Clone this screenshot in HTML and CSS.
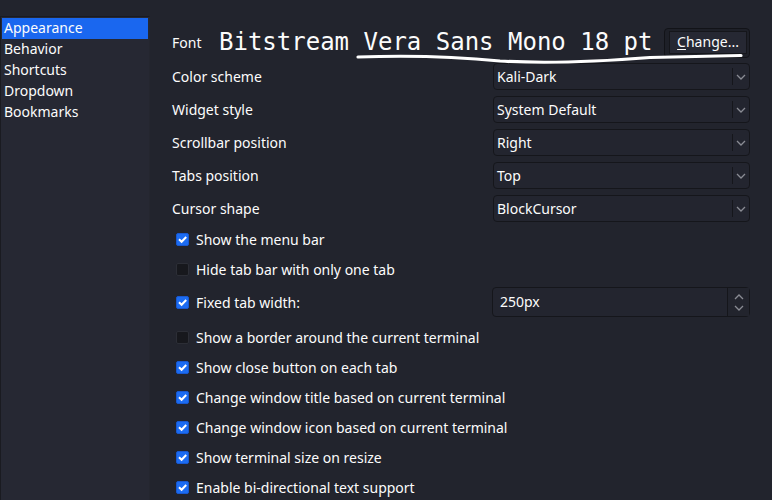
FILE: index.html
```html
<!DOCTYPE html>
<html>
<head>
<meta charset="utf-8">
<link rel="stylesheet" href="styles.css">
</head>
<body>
<div class="window">
  <ul class="pages">
    <li class="page selected">Appearance</li>
    <li class="page">Behavior</li>
    <li class="page">Shortcuts</li>
    <li class="page">Dropdown</li>
    <li class="page">Bookmarks</li>
  </ul>

  <main class="settings">
    <div class="font-row">
      <span class="label">Font</span>
      <span class="font-name">Bitstream Vera Sans Mono 18 pt</span>
      <button class="button"><span class="button-face"><u>C</u>hange...</span></button>
    </div>

    <div class="form">
      <span class="label">Color scheme</span>
      <div class="combo"><span class="combo-text">Kali-Dark</span><span class="combo-arrow"><svg width="10" height="6" viewBox="0 0 10 6"><path d="M1 1l4 4 4-4" fill="none" stroke="#8a8c94" stroke-width="1.3"/></svg></span></div>

      <span class="label">Widget style</span>
      <div class="combo"><span class="combo-text">System Default</span><span class="combo-arrow"><svg width="10" height="6" viewBox="0 0 10 6"><path d="M1 1l4 4 4-4" fill="none" stroke="#8a8c94" stroke-width="1.3"/></svg></span></div>

      <span class="label">Scrollbar position</span>
      <div class="combo"><span class="combo-text">Right</span><span class="combo-arrow"><svg width="10" height="6" viewBox="0 0 10 6"><path d="M1 1l4 4 4-4" fill="none" stroke="#8a8c94" stroke-width="1.3"/></svg></span></div>

      <span class="label">Tabs position</span>
      <div class="combo"><span class="combo-text">Top</span><span class="combo-arrow"><svg width="10" height="6" viewBox="0 0 10 6"><path d="M1 1l4 4 4-4" fill="none" stroke="#8a8c94" stroke-width="1.3"/></svg></span></div>

      <span class="label">Cursor shape</span>
      <div class="combo"><span class="combo-text">BlockCursor</span><span class="combo-arrow"><svg width="10" height="6" viewBox="0 0 10 6"><path d="M1 1l4 4 4-4" fill="none" stroke="#8a8c94" stroke-width="1.3"/></svg></span></div>
    </div>

    <div class="checks">
      <label class="check"><span class="box on"><svg width="13" height="13" viewBox="0 0 13 13"><path d="M3 6.2l2.6 2.6 4.6-4.8" fill="none" stroke="#fff" stroke-width="2"/></svg></span>Show the menu bar</label>
      <label class="check"><span class="box"></span>Hide tab bar with only one tab</label>
      <div class="check-spin">
        <label class="check"><span class="box on"><svg width="13" height="13" viewBox="0 0 13 13"><path d="M3 6.2l2.6 2.6 4.6-4.8" fill="none" stroke="#fff" stroke-width="2"/></svg></span>Fixed tab width:</label>
        <div class="spin">
          <span class="spin-text">250px</span>
          <span class="spin-buttons">
            <svg width="10" height="6" viewBox="0 0 10 6"><path d="M1 5l4-4 4 4" fill="none" stroke="#8a8c94" stroke-width="1.3"/></svg>
            <svg width="10" height="6" viewBox="0 0 10 6"><path d="M1 1l4 4 4-4" fill="none" stroke="#8a8c94" stroke-width="1.3"/></svg>
          </span>
        </div>
      </div>
      <label class="check"><span class="box"></span>Show a border around the current terminal</label>
      <label class="check"><span class="box on"><svg width="13" height="13" viewBox="0 0 13 13"><path d="M3 6.2l2.6 2.6 4.6-4.8" fill="none" stroke="#fff" stroke-width="2"/></svg></span>Show close button on each tab</label>
      <label class="check"><span class="box on"><svg width="13" height="13" viewBox="0 0 13 13"><path d="M3 6.2l2.6 2.6 4.6-4.8" fill="none" stroke="#fff" stroke-width="2"/></svg></span>Change window title based on current terminal</label>
      <label class="check"><span class="box on"><svg width="13" height="13" viewBox="0 0 13 13"><path d="M3 6.2l2.6 2.6 4.6-4.8" fill="none" stroke="#fff" stroke-width="2"/></svg></span>Change window icon based on current terminal</label>
      <label class="check"><span class="box on"><svg width="13" height="13" viewBox="0 0 13 13"><path d="M3 6.2l2.6 2.6 4.6-4.8" fill="none" stroke="#fff" stroke-width="2"/></svg></span>Show terminal size on resize</label>
      <label class="check"><span class="box on"><svg width="13" height="13" viewBox="0 0 13 13"><path d="M3 6.2l2.6 2.6 4.6-4.8" fill="none" stroke="#fff" stroke-width="2"/></svg></span>Enable bi-directional text support</label>
    </div>
  </main>

  <!-- hand-drawn underline stroke over the font row -->
  <svg class="scribble" width="772" height="80" viewBox="0 0 772 80">
    <path d="M358 57 C 400 55.5, 455 56.5, 500 61 C 540 63.5, 600 61.5, 650 57.5 L 741 55.5" fill="none" stroke="#ffffff" stroke-width="3.2" stroke-linecap="round"/>
  </svg>
</div>
</body>
</html>
```

FILE: styles.css
```css
* { box-sizing: border-box; }

html, body {
  margin: 0;
  padding: 0;
  background: #22242d;
}

body {
  width: 772px;
  height: 500px;
  overflow: hidden;
  font-family: "Noto Sans", "Open Sans", sans-serif;
  font-size: 14px;
  color: #fcfcfc;
}

.window {
  position: relative;
  display: flex;
  height: 500px;
}

/* page list on the left */
.pages {
  list-style: none;
  margin: 16px 0 0 0;
  padding: 1px;
  width: 150px;
  flex: none;
  background: #262833;
  border: 1px solid #1a1b21;
  border-right-color: #24262f;
  border-bottom: none;
}

.page {
  height: 21px;
  line-height: 20px;
  padding-left: 2px;
  white-space: nowrap;
}

.page.selected {
  background: #1a67ef;
}

/* right-hand settings panel */
.settings {
  flex: 1;
  padding: 27px 22px 0 22px;
}

.font-row {
  display: flex;
  align-items: center;
  height: 31px;
}

.font-row .label {
  width: 47px;
}

.font-name {
  font-family: "DejaVu Sans Mono", monospace;
  font-size: 24px;
  letter-spacing: 0;
  flex: 1;
  white-space: nowrap;
  position: relative;
  top: -1px;
}

.button {
  width: 86px;
  height: 30px;
  padding: 2px 2px 3px 4px;
  margin: 0;
  border: 1px solid #121318;
  border-radius: 4px;
  background: #1e2028;
  font: inherit;
  color: inherit;
  display: flex;
}

.button-face {
  flex: 1;
  border: 1px solid #15161b;
  background: #262833;
  display: flex;
  align-items: center;
  justify-content: center;
  padding-bottom: 1px;
}

.button-face u {
  text-decoration-thickness: 1px;
  text-underline-offset: 2px;
}

.form {
  display: grid;
  grid-template-columns: 321px 1fr;
  row-gap: 6px;
  margin-top: 5px;
}

.label {
  display: flex;
  align-items: center;
  white-space: nowrap;
}

.combo {
  height: 27px;
  display: flex;
  align-items: center;
  border: 1px solid #15161b;
  border-radius: 4px;
  background: #23252f;
}

.combo-text {
  flex: 1;
  padding-left: 3px;
  padding-bottom: 1px;
}

.combo-arrow {
  width: 17px;
  height: 17px;
  display: flex;
  align-items: center;
  justify-content: center;
  border-left: 1px solid #15161b;
}

.checks {
  display: flex;
  flex-direction: column;
  margin-top: 2px;
}

.check {
  height: 30px;
  display: flex;
  align-items: center;
  gap: 7px;
  padding-left: 4px;
  white-space: nowrap;
}

.box {
  width: 13px;
  height: 13px;
  flex: none;
  border-radius: 2px;
  background: #17181d;
  border: 1px solid #2c2e36;
}

.box.on {
  background: #1c6cf2;
  border: 1px solid #1858d0;
}

.box.on svg {
  display: block;
  margin: -1px 0 0 -1px;
}

.check-spin {
  display: flex;
  justify-content: space-between;
  align-items: center;
  height: 30px;
  margin: 3px 0 5px 0;
}

.spin {
  width: 258px;
  height: 30px;
  display: flex;
  border: 1px solid #15161b;
  border-radius: 4px;
  background: #23252f;
}

.spin-text {
  flex: 1;
  display: flex;
  align-items: center;
  padding-left: 7px;
  padding-bottom: 1px;
  border-right: 1px solid #15161b;
}

.spin-buttons {
  width: 21px;
  display: flex;
  flex-direction: column;
  align-items: center;
  justify-content: space-around;
  padding: 3px 0 2px 0;
  background: #22242d;
}

.spin-buttons svg { display: block; }

.scribble {
  position: absolute;
  left: 0;
  top: 0;
  pointer-events: none;
}
```
